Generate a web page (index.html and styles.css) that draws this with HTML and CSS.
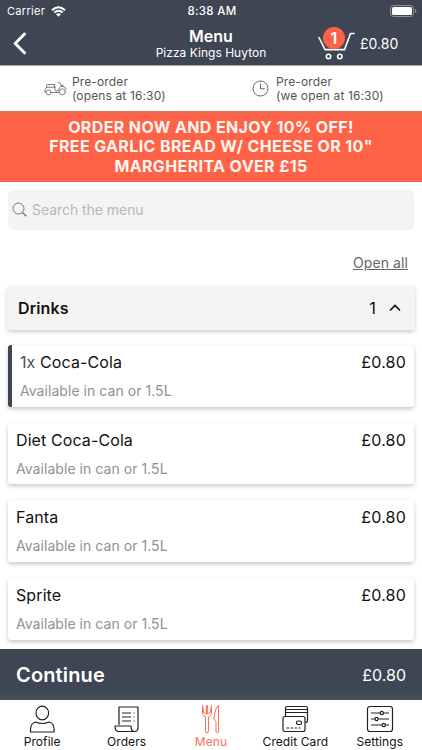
FILE: index.html
```html
<!DOCTYPE html>
<html lang="en">
<head>
<meta charset="utf-8">
<title>Menu - Pizza Kings Huyton</title>
<link rel="stylesheet" href="styles.css">
</head>
<body>
<div class="app">
  <header class="header">
    <div class="status">
      <div class="carrier"><span>Carrier</span>
        <svg width="15" height="11" viewBox="0 0 15 11" fill="none" stroke="#fff" stroke-width="2"><path d="M1 4.200Q7.500-1.800 14 4.200"/><path d="M3.300 6.600Q7.500 2.900 11.700 6.600"/><path d="M5 8.300L7.500 10.800L10 8.300Q7.500 6.300 5 8.300Z" fill="#fff" stroke="none"/></svg>
      </div>
      <div class="time">8:38 AM</div>
      <svg class="battery" width="27" height="13" viewBox="0 0 27 13"><rect x=".5" y=".5" width="23" height="11" rx="3" fill="none" stroke="#8b929b"/><rect x="2" y="2" width="20" height="8" rx="1.500" fill="#fff"/><path d="M25 4v4q1.500-.5 1.500-2t-1.500-2" fill="#8b929b"/></svg>
    </div>
    <div class="nav">
      <svg class="back" width="14" height="23" viewBox="0 0 14 23" fill="none" stroke="#fff" stroke-width="3" stroke-linecap="round" stroke-linejoin="round"><path d="M11.500 2L2.200 11.500L11.500 20.800"/></svg>
      <div class="titles"><h1>Menu</h1><p>Pizza Kings Huyton</p></div>
      <div class="basket">
        <div class="cart">
          <svg width="37" height="30" viewBox="0 0 37 30" fill="none" stroke="#fff" stroke-width="1.600" stroke-linecap="round" stroke-linejoin="round"><path d="M1 7.500L7 19.600H26.500L32.500 3.500H36"/><circle cx="10.500" cy="26.500" r="2.200"/><circle cx="21.800" cy="26.500" r="2.200"/></svg>
          <span class="badge">1</span>
        </div>
        <span class="basket-total">£0.80</span>
      </div>
    </div>
  </header>

  <section class="info">
    <div class="info-item delivery">
      <svg width="23" height="15" viewBox="0 0 23 15" fill="none" stroke="#707070" stroke-width=".9" stroke-linecap="round" stroke-linejoin="round"><path d="M3.500 3.500h7M2.500 6.200h8.500M2.500 6.200V4.500q0-1 1-1M10.500 3.500v2.700M11 6.200q-.8 2 .5 3.800h3q0-3.500 3-5.200L15.800 1.500h-1.600M17 4.300h2.200M17.500 5.200q3.800-.2 4.700 3.300M1.500 11H.8q-.5-3 2-4.800M7.500 11.500h7.500"/><circle cx="4.600" cy="11.400" r="2.500"/><circle cx="18.400" cy="10.800" r="3"/></svg>
      <p>Pre-order<br>(opens at 16:30)</p>
    </div>
    <div class="info-item collection">
      <svg width="17" height="17" viewBox="0 0 17 17" fill="none" stroke="#666" stroke-width="1"><circle cx="8.500" cy="8.500" r="7.500"/><path d="M8.500 3.800v5h4.200"/></svg>
      <p>Pre-order<br>(we open at 16:30)</p>
    </div>
  </section>

  <div class="banner">ORDER NOW AND ENJOY 10% OFF!<br>FREE GARLIC BREAD W/ CHEESE OR 10"<br>MARGHERITA OVER £15</div>

  <main class="content">
    <div class="search">
      <svg width="16" height="16" viewBox="0 0 16 16" fill="none" stroke="#777" stroke-width="1"><circle cx="6.500" cy="6.500" r="5.500"/><path d="M10.500 10.500L14.300 14.300" stroke-width="1.500"/></svg>
      <span>Search the menu</span>
    </div>
    <div class="open-row"><a>Open all</a></div>
    <div class="category">
      <h2>Drinks</h2><span class="count">1</span>
      <svg width="12" height="8" viewBox="0 0 12 8" fill="none" stroke="#111" stroke-width="1.600"><path d="M1 6.500L6 1.500L11 6.500"/></svg>
    </div>
    <div class="items">
      <article class="item selected"><div class="row"><h3><span class="qty">1x</span> Coca-Cola</h3><span class="price">£0.80</span></div><p>Available in can or 1.5L</p></article>
      <article class="item"><div class="row"><h3>Diet Coca-Cola</h3><span class="price">£0.80</span></div><p>Available in can or 1.5L</p></article>
      <article class="item"><div class="row"><h3>Fanta</h3><span class="price">£0.80</span></div><p>Available in can or 1.5L</p></article>
      <article class="item"><div class="row"><h3>Sprite</h3><span class="price">£0.80</span></div><p>Available in can or 1.5L</p></article>
    </div>
  </main>

  <div class="continue"><strong>Continue</strong><span>£0.80</span></div>

  <nav class="tabs">
    <div class="tab"><svg width="28" height="30" viewBox="0 0 28 30"><ellipse cx="14.300" cy="9" rx="6.300" ry="6.800"/><path d="M2.500 28v-3q.5-6 5-7q6.800 3 13.600 0q4.500 1 5 7v3Z"/></svg><span>Profile</span></div>
    <div class="tab"><svg width="28" height="30" viewBox="0 0 28 30"><path d="M6 21V3H25V24q0 3.500-3.500 3.500H5.500q-3.500 0-3.500-5.500h16q0 5.500 3.500 5.500"/><path d="M9 9h9M9 13h9M9 17h9M20.500 9h1M20.500 13h1M20.500 17h1"/></svg><span>Orders</span></div>
    <div class="tab active"><svg width="28" height="30" viewBox="0 0 28 30"><path d="M5.500 1.500V9q0 2.500 3 3.800V26.500q0 2.300 1.500 2.300t1.500-2.300V12.800q3-1.300 3-3.800V1.500L13.300 8.500L10.600 10V1.500H9.400V10L6.700 8.500Z"/><path d="M21.500 1.200Q18.300 4 16.800 14.500L19 17.500V27q0 1.800 1.300 1.800T21.600 27Z"/></svg><span>Menu</span></div>
    <div class="tab"><svg class="cards" width="28" height="30" viewBox="0 0 28 30"><path d="M4.500 12V4.500q0-2 2-2h18q2 0 2 2v12q0 2-2 2M4.500 5.500h22M4.500 8.500h22"/><rect x="2" y="12.500" width="22" height="15" rx="2"/><rect x="15.500" y="17" width="5" height="3.500" rx="1.500"/><path d="M5.500 24h14" stroke-dasharray="2.500 1.500"/></svg><span>Credit Card</span></div>
    <div class="tab"><svg width="28" height="30" viewBox="0 0 28 30"><rect x="1.500" y="2.500" width="25" height="25" rx="2.500"/><path d="M5 9h9M17.500 9H23M5 15h4M12.500 15H23M5 21h11M19.500 21H23"/><circle cx="15.800" cy="9" r="1.600"/><circle cx="10.600" cy="15" r="1.600"/><circle cx="17.800" cy="21" r="1.600"/></svg><span>Settings</span></div>
  </nav>
</div>
</body>
</html>
```
FILE: styles.css
```css
* { box-sizing: border-box; }
body, h1, h2, h3, p { margin: 0; }
body { font-family: Inter, "Liberation Sans", sans-serif; background: #fff; color: #111; }
svg { display: block; flex: none; }
.app { width: 422px; height: 750px; display: flex; flex-direction: column; overflow: hidden; }

.header { height: 66px; flex: none; background: #3d4652; color: #fff; border-bottom: 1px solid #a5aab0; }
.status { height: 22px; display: grid; grid-template-columns: 1fr auto 1fr; align-items: center; padding: 0 5px 0 7px; font-size: 11px; }
.carrier { display: flex; align-items: center; gap: 6px; letter-spacing: .3px; }
.time { font-weight: 500; letter-spacing: .3px; font-size: 11.5px; }
.battery { justify-self: end; }
.nav { height: 43px; display: grid; grid-template-columns: 106px 210px 106px; align-items: center; }
.back { margin-left: 13px; }
.titles { text-align: center; padding-top: 1px; }
.titles h1 { font-size: 16px; line-height: 18px; font-weight: 600; }
.titles p { font-size: 12px; line-height: 16px; letter-spacing: .02px; }
.basket { display: flex; align-items: center; gap: 5px; padding-left: 2px; }
.cart { position: relative; padding-top: 2px; }
.badge { position: absolute; left: 5px; top: -1px; width: 22px; height: 22px; border-radius: 50%; background: #fd6249; text-align: center; font-size: 16px; line-height: 22px; font-weight: 600; }
.basket-total { font-size: 14px; }

.info { height: 45px; flex: none; display: grid; grid-template-columns: 1fr 1fr; }
.info-item { display: flex; align-items: center; color: #555; font-size: 12px; line-height: 14px; letter-spacing: .13px; }
.delivery { padding-left: 44px; gap: 5px; }
.collection { padding-left: 41px; gap: 7px; }

.banner { height: 71px; flex: none; background: linear-gradient(#dc6c58, #ff6347 4px); color: #fff5f0; text-align: center; font-size: 16px; line-height: 19.300px; font-weight: 700; letter-spacing: .38px; padding-top: 7px; white-space: nowrap; }

.content { height: 467px; flex: none; padding: 8px 8px 0; overflow: hidden; }
.search { height: 40px; border-radius: 5px; background: #f4f4f4; display: flex; align-items: center; gap: 4px; padding: 0 0 1px 4px; color: #b7b7bb; font-size: 14px; letter-spacing: -.05px; }
.open-row { height: 56px; display: flex; justify-content: flex-end; align-items: flex-end; padding: 0 6px 14px 0; color: #666; font-size: 14px; line-height: 18px; letter-spacing: .1px; }
.open-row a { text-decoration: underline; }
.category { height: 44px; margin: 0 -1px; padding: 0 14px 0 11px; background: #f4f4f4; border-radius: 3px; box-shadow: 0 2px 4px rgba(0,0,0,.2); display: flex; align-items: center; }
.category h2 { flex: 1; font-size: 16px; font-weight: 600; letter-spacing: .1px; }
.count { font-size: 16.500px; margin-right: 13px; }
.items { display: flex; flex-direction: column; gap: 16px; margin-top: 15px; }
.item { height: 61.700px; border-radius: 3px; background: #fff; box-shadow: 0 2px 4px rgba(0,0,0,.22); padding: 7px 8px 0; }
.item.selected { border-left: 4px solid #3d4652; }
.row { display: flex; justify-content: space-between; line-height: 20px; font-size: 16px; }
.row h3 { font-size: 16px; font-weight: 400; letter-spacing: .1px; }
.price { letter-spacing: .2px; }
.qty { color: #46505c; }
.item p { margin-top: 10px; font-size: 14px; line-height: 17px; letter-spacing: .05px; color: #919191; }

.continue { height: 51px; flex: none; background: linear-gradient(#3d4652 44px, #4a525e 50px); color: #fff; display: flex; justify-content: space-between; align-items: center; padding: 0 16px; font-size: 16px; }
.continue strong { font-size: 20px; font-weight: 600; letter-spacing: .15px; }

.tabs { flex: 1; display: grid; grid-template-columns: repeat(5, 1fr); }
.tab { display: flex; flex-direction: column; align-items: center; padding-top: 4px; font-size: 12px; line-height: 15px; letter-spacing: .08px; white-space: nowrap; }
.tab svg { fill: none; stroke: #222; stroke-width: 1.200; stroke-linejoin: round; }
.tab.active { color: #f9705a; }
.tab.active svg { stroke: #f9705a; stroke-width: 1; }
```
